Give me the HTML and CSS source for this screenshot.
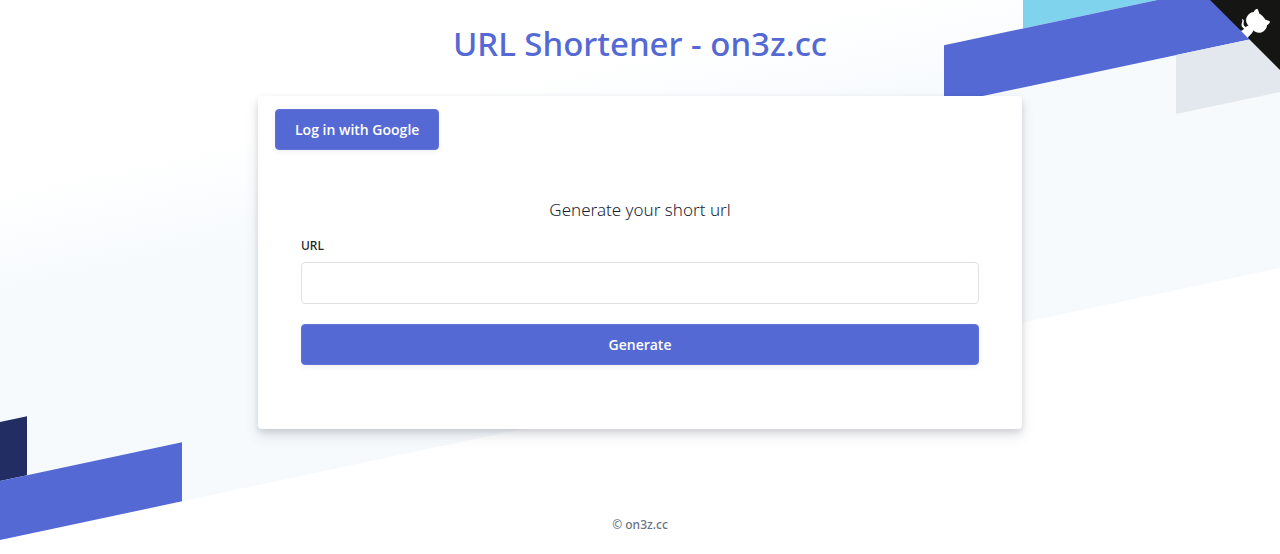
FILE: index.html
```html
<!DOCTYPE html>
<html lang="en">
<head>
<meta charset="utf-8">
<meta name="viewport" content="width=device-width, initial-scale=1">
<title>URL Shortener - on3z.cc</title>
<link rel="stylesheet" href="styles.css">
</head>
<body>
<div class="page">
  <div class="stripes" aria-hidden="true">
    <span class="stripe stripe-cyan"></span>
    <span class="stripe stripe-indigo"></span>
    <span class="stripe stripe-grey"></span>
    <span class="stripe stripe-navy"></span>
    <span class="stripe stripe-base"></span>
  </div>

  <a class="github-corner" href="#" aria-label="View source on GitHub">
    <svg viewBox="10 10 240 240" aria-hidden="true">
      <path fill="#151513" d="M0,0 L115,115 L130,115 L142,142 L250,250 L250,0 Z"/>
      <path fill="#fff" d="M128.3,109.0 C113.8,99.7 119.0,89.6 119.0,89.6 C122.0,82.7 120.5,78.6 120.5,78.6 C119.2,72.0 123.4,76.3 123.4,76.3 C127.3,80.9 125.5,87.3 125.5,87.3 C122.9,97.6 130.6,101.9 134.4,103.2"/>
      <path fill="#fff" d="M115.0,115.0 C114.9,115.1 118.7,116.5 119.8,115.4 L133.7,101.6 C136.9,99.2 139.9,98.4 142.2,98.6 C133.8,88.0 127.5,74.4 143.8,58.0 C148.5,53.4 154.0,51.2 159.7,51.0 C160.3,49.4 163.2,43.6 171.4,40.1 C171.4,40.1 176.1,42.5 178.8,56.2 C183.1,58.6 187.2,61.8 190.9,65.4 C194.5,69.0 197.7,73.2 200.1,77.6 C213.8,80.2 216.3,84.9 216.3,84.9 C212.7,93.1 206.9,96.0 205.4,96.6 C205.1,102.4 203.0,107.8 198.3,112.5 C181.9,128.9 168.3,122.5 157.7,114.1 C157.9,116.9 156.7,120.9 152.7,124.9 L141.0,136.5 C139.8,137.7 141.6,141.9 141.8,141.8 Z"/>
    </svg>
  </a>

  <header class="header">
    <h1 class="title">URL Shortener - on3z.cc</h1>
  </header>

  <main class="card">
    <button class="button" type="button">Log in with Google</button>
    <form class="form">
      <h2 class="form-title">Generate your short url</h2>
      <label class="label" for="url">URL</label>
      <input class="input" id="url" name="url" type="text">
      <button class="button button-wide" type="submit">Generate</button>
    </form>
  </main>

  <footer class="footer">© on3z.cc</footer>
</div>
</body>
</html>
```
FILE: styles.css
```css
* {
  box-sizing: border-box;
}

body {
  margin: 0;
  background: #fff;
  color: #212529;
  font-family: "Segoe UI", "Noto Sans", "Open Sans", sans-serif;
  font-size: 14px;
}

.page {
  position: relative;
  display: flex;
  flex-direction: column;
  align-items: center;
  min-height: 100vh;
  overflow: hidden;
}

.stripes {
  position: absolute;
  inset: 0 0 auto;
  display: grid;
  grid-template-rows: repeat(3, 59px) 58px repeat(2, 59px);
  padding-top: 187px;
  transform: skewY(-12deg);
  transform-origin: 0 0;
  background: linear-gradient(#fff 190px, #f6fafd 300px);
}

.stripe-cyan {
  grid-row: 1;
  margin-left: calc(50% + 383px);
  background: #80d3ed;
}

.stripe-indigo {
  grid-row: 2;
  margin-left: calc(50% + 304px);
  background: #5469d4;
}

.stripe-grey {
  grid-row: 3;
  margin-left: calc(50% + 536px);
  background: #e3e8ee;
}

.stripe-navy {
  grid-row: 5;
  width: calc(50% - 613px);
  background: #212d63;
}

.stripe-base {
  grid-row: 6;
  width: calc(50% - 458px);
  background: #5469d4;
}

.github-corner {
  position: absolute;
  top: 0;
  right: 0;
}

.github-corner svg {
  display: block;
  width: 70px;
  height: 70px;
}

.header {
  position: relative;
  padding: 20px 16px 28px;
}

.title {
  margin: 0;
  color: #5469d4;
  font-size: 33px;
  font-weight: 500;
  line-height: 48px;
  text-align: center;
}

.card {
  position: relative;
  width: calc(100% - 32px);
  max-width: 764px;
  padding: 13px 17px 64px;
  border-radius: 4px;
  background: #fff;
  box-shadow: 0 7px 14px rgba(60, 66, 87, 0.12), 0 3px 6px rgba(0, 0, 0, 0.12);
}

.button {
  height: 41px;
  padding: 0 19px;
  border: 1px solid #6073d8;
  border-radius: 4px;
  background: #5469d4;
  box-shadow: 0 2px 5px rgba(60, 66, 87, 0.08);
  color: #fff;
  font-family: "Segoe UI", "Open Sans", "Noto Sans", sans-serif;
  font-size: 14px;
  font-weight: 600;
  cursor: pointer;
}

.button-wide {
  width: 100%;
}

.form {
  display: flex;
  flex-direction: column;
  padding: 48px 26px 0;
}

.form-title {
  margin: 0 0 14px;
  color: #1a1f36;
  font-size: 17px;
  font-weight: 300;
  line-height: 24px;
  text-align: center;
}

.label {
  margin-bottom: 6px;
  font-size: 12px;
  font-weight: 500;
  line-height: 20px;
}

.input {
  width: 100%;
  height: 42px;
  margin-bottom: 20px;
  padding: 0 14px;
  border: 1px solid #e0e1e2;
  border-radius: 4px;
  background: #fff;
  color: inherit;
  font: inherit;
}

.footer {
  position: relative;
  padding: 86px 16px 18px;
  color: #697386;
  font-size: 12px;
  font-weight: 500;
  line-height: 20px;
}
```
